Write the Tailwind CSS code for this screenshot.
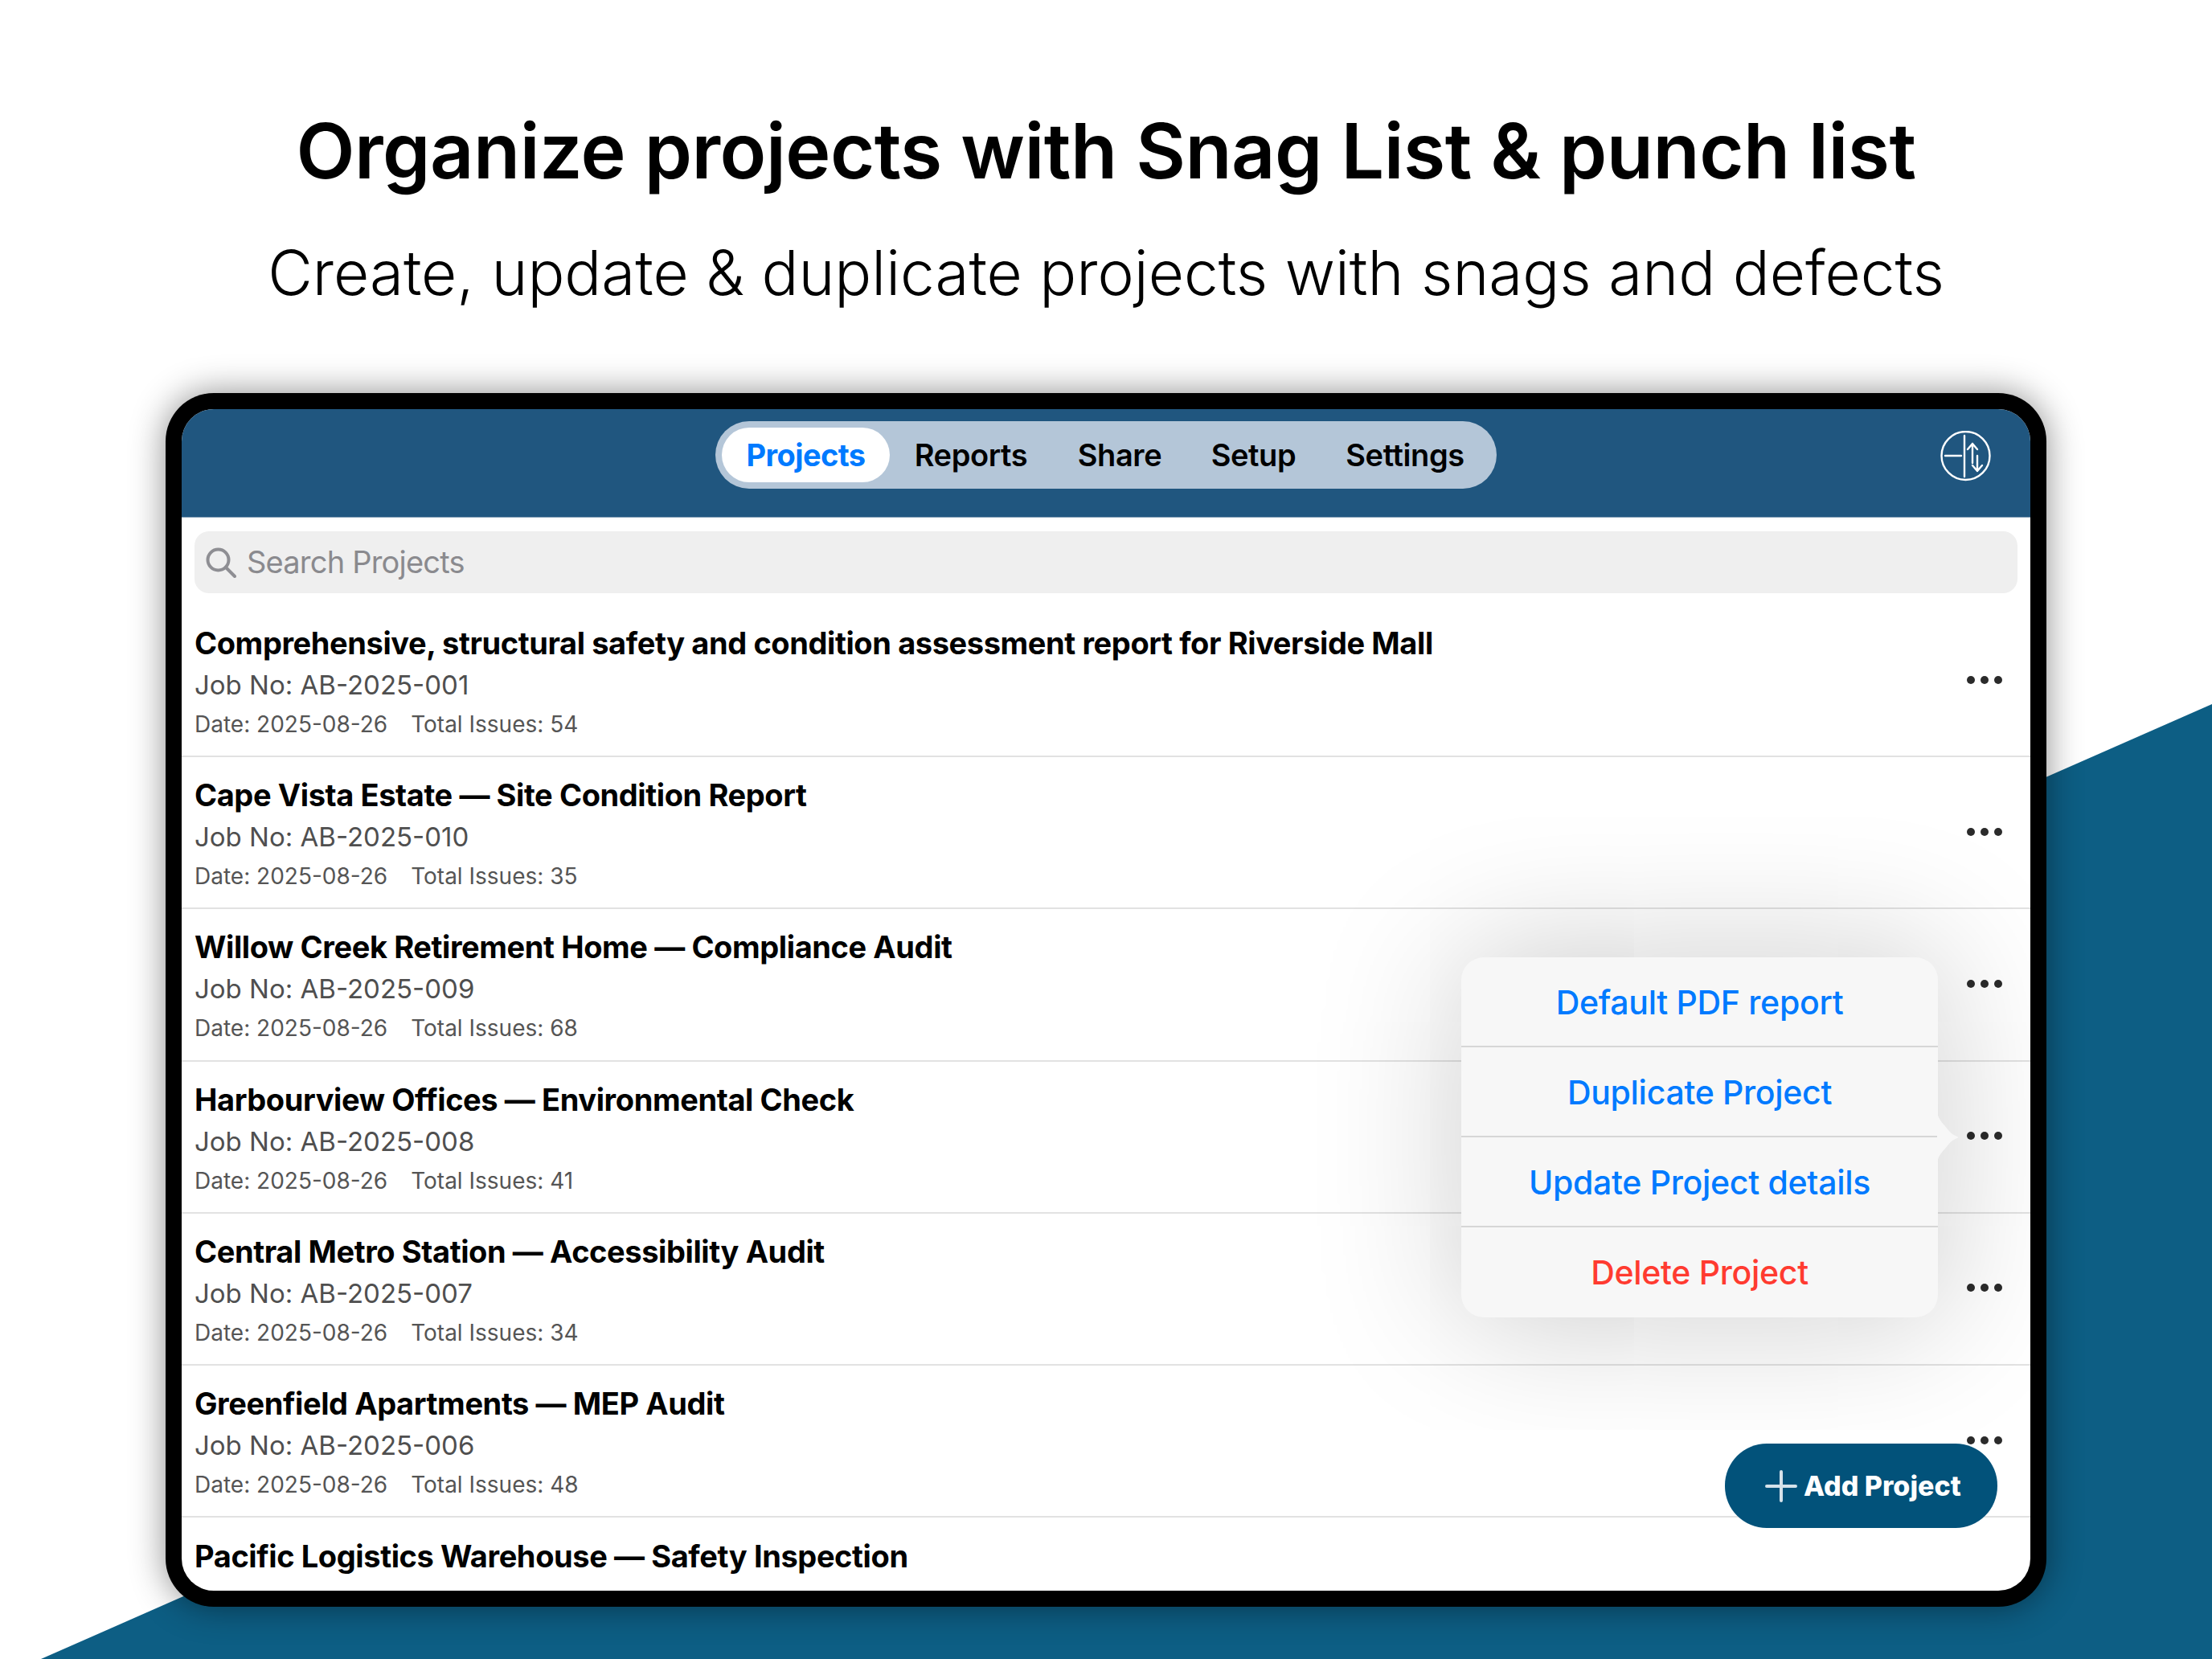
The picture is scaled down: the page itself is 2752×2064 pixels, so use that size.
<!DOCTYPE html>
<html>
<head>
  <meta charset="UTF-8">
  <meta name="viewport" content="width=device-width, initial-scale=1.0">
  <script src="https://cdn.jsdelivr.net/npm/@tailwindcss/browser@4"></script>
</head>
<body class="bg-white font-[Inter,sans-serif]">
  <div class="relative w-[2752px] h-[2064px] overflow-hidden bg-white">
    <!-- corner wedge -->
    <svg class="absolute left-0 top-0" width="2752" height="2064" viewBox="0 0 2752 2064"><polygon points="51,2064 2752,876 2752,2064" fill="#0d5e84"/></svg>

    <div class="relative flex flex-col items-center">
      <h1 class="mt-[132px] h-[112px] leading-[112px] text-[95px] font-semibold text-black tracking-[-0.5px]">Organize projects with Snag List &amp; punch list</h1>
      <p class="mt-[55px] h-[80px] leading-[80px] text-[76.4px] font-light text-black">Create, update &amp; duplicate projects with snags and defects</p>
    </div>

    <!-- tablet -->
    <div class="relative mt-[110px] ml-[206px] w-[2340px] h-[1510px] p-[20px] bg-black rounded-[60px] shadow-[0_0_44px_rgba(0,0,0,0.45)]">
      <div class="relative w-[2300px] h-[1470px] bg-white rounded-[40px] overflow-hidden">
        <div class="h-[135px] bg-[#20567f] border-b border-[#7f9cb4] grid grid-cols-[1fr_auto_1fr] items-start pt-[15px]">
          <div></div>
          <div class="flex items-center h-[84px] w-[972px] px-[8px] rounded-full bg-[#b4c6d8] text-[38px] font-semibold tracking-[-0.4px] text-black">
            <span class="w-[209px] h-[68px] leading-[68px] text-center rounded-full bg-white text-[#007aff] font-bold tracking-[-0.6px]">Projects</span>
            <span class="w-[202px] text-center">Reports</span>
            <span class="w-[168px] text-center">Share</span>
            <span class="w-[165px] text-center">Setup</span>
            <span class="w-[212px] text-center">Settings</span>
          </div>
          <div class="flex justify-end pt-[12px] pr-[48px]">
            <svg width="64" height="64" viewBox="0 0 64 64" fill="none" stroke="white" stroke-width="2.4" stroke-linecap="round" stroke-linejoin="round">
              <circle cx="31.5" cy="31" r="30"/>
              <path d="M30 6V57"/>
              <path d="M6 31H26"/>
              <path d="M40 16V40M34 23L40 16L46 23"/>
              <path d="M46 31V50M40 43L46 50L52 43"/>
            </svg>
          </div>
        </div>

        <div class="mx-[16px] mt-[17px] h-[77px] rounded-[18px] bg-[#efefef] flex items-center pl-[14px] gap-[13px] text-[38px] tracking-[-0.8px] text-[#8a8a8e]">
          <svg width="38" height="38" viewBox="0 0 38 38" fill="none" stroke="#8e8e93" stroke-width="4" stroke-linecap="round"><circle cx="15.5" cy="15.5" r="13"/><path d="M25 25L36 36"/></svg>
          <span>Search Projects</span>
        </div>

        <div class="mt-[15px] flex flex-col">
          <div class="h-[189.2px] shrink-0 border-b-2 border-[#e2e2e2] flex justify-between items-center pl-[16px] pr-[35px]">
            <div class="flex flex-col pt-[3px]">
              <div class="leading-[46px] text-[38px] font-bold tracking-[-0.4px] text-black">Comprehensive, structural safety and condition assessment report for Riverside Mall</div>
              <div class="mt-[6px] leading-[46px] text-[33px] text-[#4f4f4f]">Job No: AB-2025-001</div>
              <div class="mt-[8px] leading-[36px] text-[28px] text-[#555555]">Date: 2025-08-26<span class="ml-[29px]">Total Issues: 54</span></div>
            </div>
            <div class="flex gap-[7px] mb-[2px]"><i class="size-[10px] rounded-full bg-[#2b2b2b]"></i><i class="size-[10px] rounded-full bg-[#2b2b2b]"></i><i class="size-[10px] rounded-full bg-[#2b2b2b]"></i></div>
          </div>
          <div class="h-[189.2px] shrink-0 border-b-2 border-[#e2e2e2] flex justify-between items-center pl-[16px] pr-[35px]">
            <div class="flex flex-col pt-[3px]">
              <div class="leading-[46px] text-[38px] font-bold tracking-[-0.4px] text-black">Cape Vista Estate — Site Condition Report</div>
              <div class="mt-[6px] leading-[46px] text-[33px] text-[#4f4f4f]">Job No: AB-2025-010</div>
              <div class="mt-[8px] leading-[36px] text-[28px] text-[#555555]">Date: 2025-08-26<span class="ml-[29px]">Total Issues: 35</span></div>
            </div>
            <div class="flex gap-[7px] mb-[2px]"><i class="size-[10px] rounded-full bg-[#2b2b2b]"></i><i class="size-[10px] rounded-full bg-[#2b2b2b]"></i><i class="size-[10px] rounded-full bg-[#2b2b2b]"></i></div>
          </div>
          <div class="h-[189.2px] shrink-0 border-b-2 border-[#e2e2e2] flex justify-between items-center pl-[16px] pr-[35px]">
            <div class="flex flex-col pt-[3px]">
              <div class="leading-[46px] text-[38px] font-bold tracking-[-0.4px] text-black">Willow Creek Retirement Home — Compliance Audit</div>
              <div class="mt-[6px] leading-[46px] text-[33px] text-[#4f4f4f]">Job No: AB-2025-009</div>
              <div class="mt-[8px] leading-[36px] text-[28px] text-[#555555]">Date: 2025-08-26<span class="ml-[29px]">Total Issues: 68</span></div>
            </div>
            <div class="flex gap-[7px] mb-[2px]"><i class="size-[10px] rounded-full bg-[#2b2b2b]"></i><i class="size-[10px] rounded-full bg-[#2b2b2b]"></i><i class="size-[10px] rounded-full bg-[#2b2b2b]"></i></div>
          </div>
          <div class="h-[189.2px] shrink-0 border-b-2 border-[#e2e2e2] flex justify-between items-center pl-[16px] pr-[35px]">
            <div class="flex flex-col pt-[3px]">
              <div class="leading-[46px] text-[38px] font-bold tracking-[-0.4px] text-black">Harbourview Offices — Environmental Check</div>
              <div class="mt-[6px] leading-[46px] text-[33px] text-[#4f4f4f]">Job No: AB-2025-008</div>
              <div class="mt-[8px] leading-[36px] text-[28px] text-[#555555]">Date: 2025-08-26<span class="ml-[29px]">Total Issues: 41</span></div>
            </div>
            <div class="flex gap-[7px] mb-[2px]"><i class="size-[10px] rounded-full bg-[#2b2b2b]"></i><i class="size-[10px] rounded-full bg-[#2b2b2b]"></i><i class="size-[10px] rounded-full bg-[#2b2b2b]"></i></div>
          </div>
          <div class="h-[189.2px] shrink-0 border-b-2 border-[#e2e2e2] flex justify-between items-center pl-[16px] pr-[35px]">
            <div class="flex flex-col pt-[3px]">
              <div class="leading-[46px] text-[38px] font-bold tracking-[-0.4px] text-black">Central Metro Station — Accessibility Audit</div>
              <div class="mt-[6px] leading-[46px] text-[33px] text-[#4f4f4f]">Job No: AB-2025-007</div>
              <div class="mt-[8px] leading-[36px] text-[28px] text-[#555555]">Date: 2025-08-26<span class="ml-[29px]">Total Issues: 34</span></div>
            </div>
            <div class="flex gap-[7px] mb-[2px]"><i class="size-[10px] rounded-full bg-[#2b2b2b]"></i><i class="size-[10px] rounded-full bg-[#2b2b2b]"></i><i class="size-[10px] rounded-full bg-[#2b2b2b]"></i></div>
          </div>
          <div class="h-[189.2px] shrink-0 border-b-2 border-[#e2e2e2] flex justify-between items-center pl-[16px] pr-[35px]">
            <div class="flex flex-col pt-[3px]">
              <div class="leading-[46px] text-[38px] font-bold tracking-[-0.4px] text-black">Greenfield Apartments — MEP Audit</div>
              <div class="mt-[6px] leading-[46px] text-[33px] text-[#4f4f4f]">Job No: AB-2025-006</div>
              <div class="mt-[8px] leading-[36px] text-[28px] text-[#555555]">Date: 2025-08-26<span class="ml-[29px]">Total Issues: 48</span></div>
            </div>
            <div class="flex gap-[7px] mb-[2px]"><i class="size-[10px] rounded-full bg-[#2b2b2b]"></i><i class="size-[10px] rounded-full bg-[#2b2b2b]"></i><i class="size-[10px] rounded-full bg-[#2b2b2b]"></i></div>
          </div>
          <div class="pl-[16px] pt-[25px] leading-[46px] text-[38px] font-bold tracking-[-0.4px] text-black">Pacific Logistics Warehouse — Safety Inspection</div>
        </div>

        <!-- popover menu -->
        <div class="absolute left-[1592px] top-[682px] w-[593px] h-[448px] rounded-[28px] bg-[#f7f7f7] shadow-[0_0_180px_rgba(0,0,0,0.22)] flex flex-col text-[41px] font-medium tracking-[-0.3px] text-[#007aff] text-center">
          <div class="h-[112px] shrink-0 border-b-2 border-[#d6d6d6] leading-[113px]">Default PDF report</div>
          <div class="h-[112px] shrink-0 border-b-2 border-[#d6d6d6] leading-[113px]">Duplicate Project</div>
          <div class="h-[112px] shrink-0 border-b-2 border-[#d6d6d6] leading-[113px]">Update Project details</div>
          <div class="h-[112px] shrink-0 leading-[113px] text-[#ff3b30]">Delete Project</div>
          <svg class="absolute left-[592px] top-[193px]" width="28" height="62" viewBox="0 0 28 62"><path d="M0 0C2 10 8 14 14 22C20 30 26 29 26 31C26 33 20 32 14 40C8 48 2 52 0 62Z" fill="#f7f7f7"/></svg>
        </div>

        <!-- add button -->
        <div class="absolute left-[1920px] top-[1287px] w-[339px] h-[105px] rounded-[52px] bg-[#02527a] flex items-center pl-[50px] gap-[8px] text-[34px] font-extrabold text-white">
          <svg width="40" height="40" viewBox="0 0 40 40" stroke="#d6e2ea" stroke-width="4" stroke-linecap="round"><path d="M20 2V38M2 20H38"/></svg>
          <span>Add Project</span>
        </div>
      </div>
    </div>
  </div>
</body>
</html>
